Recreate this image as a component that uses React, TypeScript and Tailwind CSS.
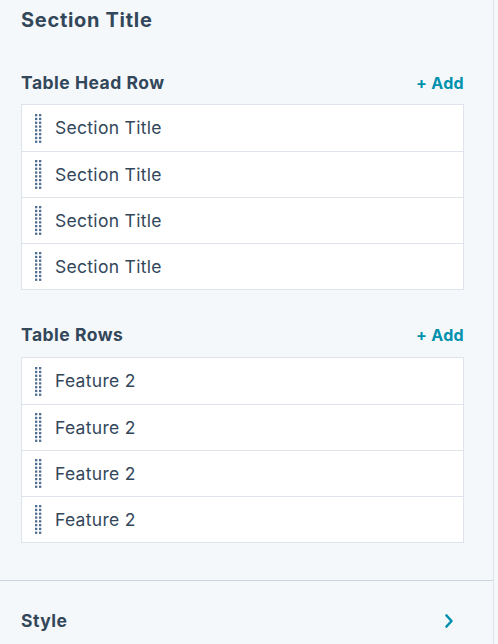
import React from "react";

function DragHandle() {
  const dots = [];
  for (let r = 0; r < 8; r++) {
    for (let c = 0; c < 2; c++) {
      dots.push(<rect key={`${r}-${c}`} x={c * 4} y={r * 3.8} width="2.3" height="2.3" fill="#516f90" />);
    }
  }
  return (
    <svg width="7" height="29" viewBox="0 0 7 29" className="shrink-0">
      {dots}
    </svg>
  );
}

function List({ items }: { items: string[] }) {
  return (
    <div className="mr-[29px] border border-[#dfe3eb] bg-white">
      {items.map((t, i) => (
        <div
          key={i}
          className={`flex h-[46px] items-center pl-[13px] ${i > 0 ? "border-t border-[#dfe3eb]" : ""}`}
        >
          <DragHandle />
          <span className="ml-[13px] text-[17.5px] leading-[20px] tracking-[0.3px] text-[#33475b]">{t}</span>
        </div>
      ))}
    </div>
  );
}

function Header({ title }: { title: string }) {
  return (
    <div className="mr-[29px] flex h-[24px] items-center justify-between">
      <span className="text-[17.5px] font-bold tracking-[0.5px] text-[#33475b]">{title}</span>
      <span className="text-[16px] font-bold tracking-[0.3px] text-[#0091ae]">+ Add</span>
    </div>
  );
}

export default function App() {
  return (
    <div
      className="flex h-[644px] w-[498px] overflow-hidden bg-[#f5f8fa]"
      style={{ fontFamily: "Inter, 'Noto Sans', sans-serif" }}
    >
      <div className="w-[494px] shrink-0 border-r border-[#dfe3eb]">
        <div className="pl-[21px]">
          <div className="h-[40px] pt-[8px] text-[20px] font-bold leading-[24px] tracking-[0.7px] text-[#33475b]">Section Title</div>
          <div className="mt-[31px]">
            <Header title="Table Head Row" />
          </div>
          <div className="mt-[9px]">
            <List items={["Section Title", "Section Title", "Section Title", "Section Title"]} />
          </div>
          <div className="mt-[33px]">
            <Header title="Table Rows" />
          </div>
          <div className="mt-[10px]">
            <List items={["Feature 2", "Feature 2", "Feature 2", "Feature 2"]} />
          </div>
        </div>
        <div className="mt-[37px] border-t border-[#cbd6e2]">
          <div className="flex h-[80px] items-center justify-between pl-[21px] pr-[39px]">
            <span className="text-[17.5px] font-bold tracking-[0.5px] text-[#33475b]">Style</span>
            <svg width="10" height="16" viewBox="0 0 10 16">
              <path d="M2.5 2.5 L7.5 8 L2.5 13.5" fill="none" stroke="#0091ae" strokeWidth="2.6" strokeLinecap="round" strokeLinejoin="round" />
            </svg>
          </div>
        </div>
      </div>
    </div>
  );
}
